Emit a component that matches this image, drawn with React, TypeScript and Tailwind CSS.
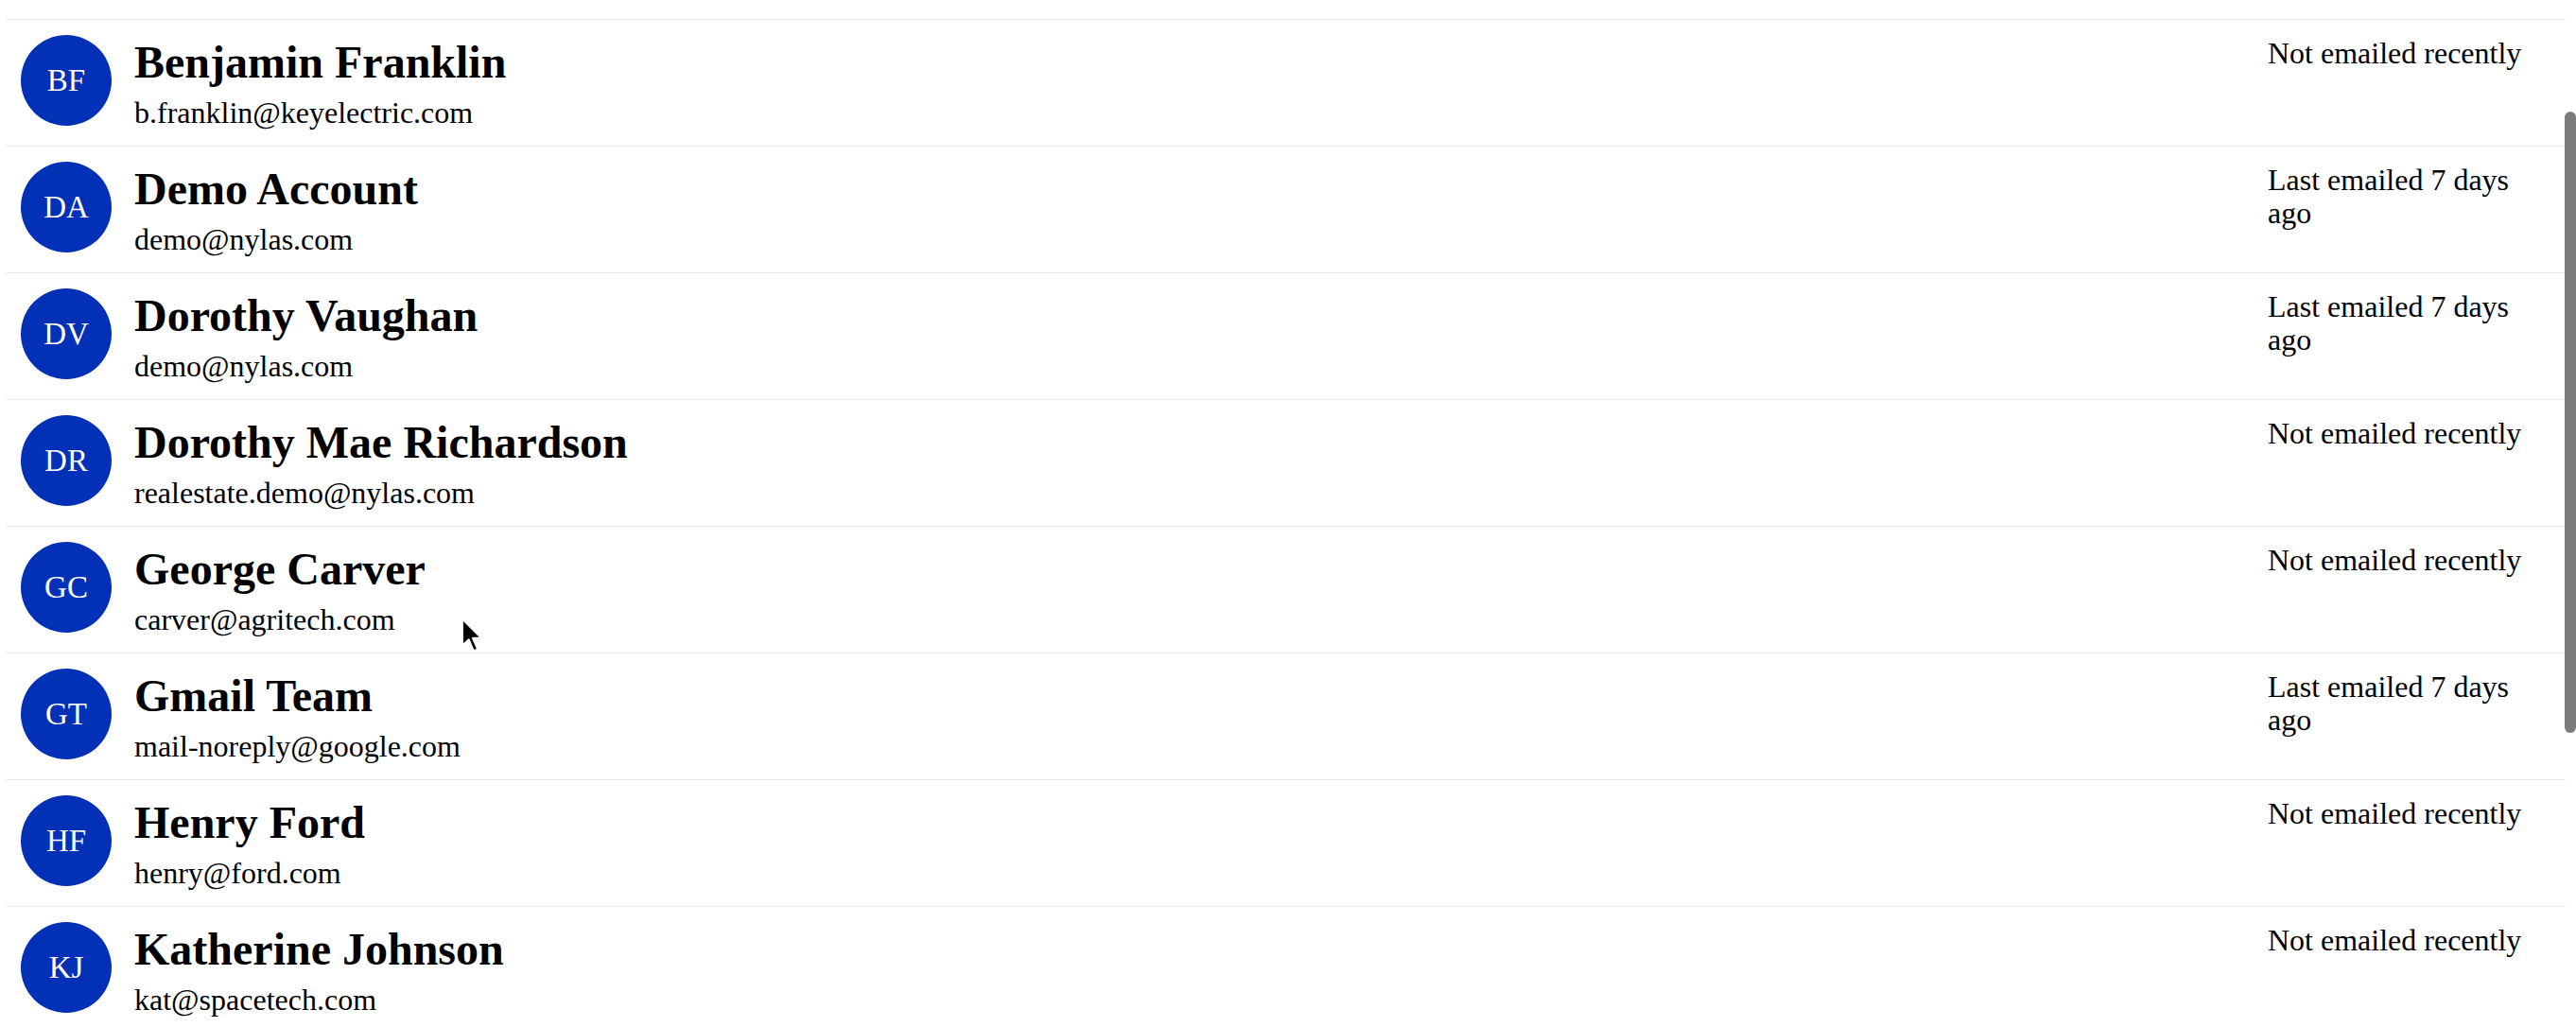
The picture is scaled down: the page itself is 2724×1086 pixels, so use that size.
import React from "react";

type Contact = {
  initials: string;
  name: string;
  email: string;
  status: string;
};

const contacts: Contact[] = [
  { initials: "BF", name: "Benjamin Franklin", email: "b.franklin@keyelectric.com", status: "Not emailed recently" },
  { initials: "DA", name: "Demo Account", email: "demo@nylas.com", status: "Last emailed 7 days ago" },
  { initials: "DV", name: "Dorothy Vaughan", email: "demo@nylas.com", status: "Last emailed 7 days ago" },
  { initials: "DR", name: "Dorothy Mae Richardson", email: "realestate.demo@nylas.com", status: "Not emailed recently" },
  { initials: "GC", name: "George Carver", email: "carver@agritech.com", status: "Not emailed recently" },
  { initials: "GT", name: "Gmail Team", email: "mail-noreply@google.com", status: "Last emailed 7 days ago" },
  { initials: "HF", name: "Henry Ford", email: "henry@ford.com", status: "Not emailed recently" },
  { initials: "KJ", name: "Katherine Johnson", email: "kat@spacetech.com", status: "Not emailed recently" },
];

function Row({ c }: { c: Contact }) {
  return (
    <div className="flex h-[134px] shrink-0 items-start border-t border-[#e8e8e8] pl-[16px] pt-[16px]">
      <div className="flex h-[96px] w-[96px] shrink-0 items-center justify-center rounded-full bg-[#0230b6] text-[33px] leading-[37px] text-white">
        {c.initials}
      </div>
      <div className="ml-[24px] mt-[1px] flex flex-col">
        <div className="text-[48px] font-bold leading-[55px] text-black">{c.name}</div>
        <div className="mt-[8px] text-[32px] leading-[37px] text-black">{c.email}</div>
      </div>
      <div className="ml-auto mr-[25px] mt-[2px] w-[290px] shrink-0 text-[32px] leading-[35px] text-black">
        {c.status}
      </div>
    </div>
  );
}

export default function App() {
  return (
    <div
      className="relative h-screen w-full overflow-hidden bg-white"
      style={{ fontFamily: '"Liberation Serif", "Times New Roman", serif' }}
    >
      <div className="flex flex-col pl-[6px] pr-[11px] pt-[20px]">
        {contacts.map((c) => (
          <Row key={c.initials + c.name} c={c} />
        ))}
      </div>

      {/* overlay scrollbar */}
      <div className="absolute left-[2712px] top-[118px] h-[657px] w-[12px] rounded-[6px] bg-[#7b7b7b]" />

      {/* mouse cursor */}
      <svg
        className="absolute left-[485px] top-[652px]"
        width="28"
        height="41"
        viewBox="0 0 24 36"
      >
        <path
          d="M3 2 L3 27 L9 21.5 L13.5 32 L17.5 30.3 L13 20 L21 20 Z"
          fill="#000"
          stroke="#fff"
          strokeWidth="2"
          strokeLinejoin="round"
        />
      </svg>
    </div>
  );
}
